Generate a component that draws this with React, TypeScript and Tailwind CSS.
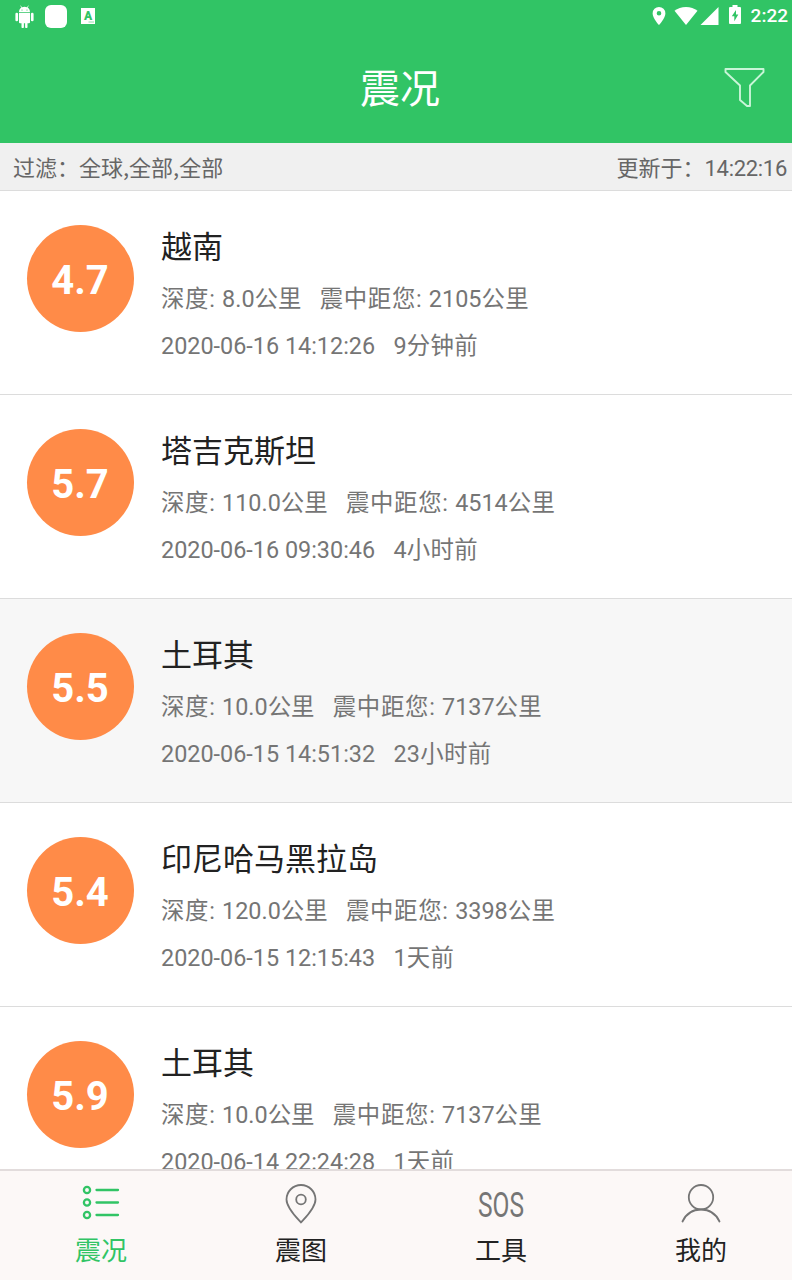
import type { ReactNode } from "react";

// ─── Data ────────────────────────────────────────────────────────────────────

interface Quake {
  magnitude: string;
  place: string;
  depth: string;
  distance: string;
  time: string;
  ago: string;
  active?: boolean;
}

const quakes: Quake[] = [
  { magnitude: "4.7", place: "越南", depth: "8.0", distance: "2105", time: "2020-06-16 14:12:26", ago: "9分钟前" },
  { magnitude: "5.7", place: "塔吉克斯坦", depth: "110.0", distance: "4514", time: "2020-06-16 09:30:46", ago: "4小时前" },
  { magnitude: "5.5", place: "土耳其", depth: "10.0", distance: "7137", time: "2020-06-15 14:51:32", ago: "23小时前", active: true },
  { magnitude: "5.4", place: "印尼哈马黑拉岛", depth: "120.0", distance: "3398", time: "2020-06-15 12:15:43", ago: "1天前" },
  { magnitude: "5.9", place: "土耳其", depth: "10.0", distance: "7137", time: "2020-06-14 22:24:28", ago: "1天前" },
];

// ─── Status Bar ──────────────────────────────────────────────────────────────

function StatusBar() {
  return (
    <div className="flex h-8 shrink-0 items-center justify-between pl-[15px] pr-1 text-white">
      <div className="flex items-center">
        {/* Android robot */}
        <svg width="19" height="24" viewBox="0 0 19 24" fill="currentColor">
          <path d="M4 8.2C4 5.8 5.1 4.4 6.4 3.6L5.2 1.8l.5-.3L7 3.2a6.5 6.5 0 0 1 5 0l1.3-1.7.5.3-1.2 1.8C13.9 4.4 15 5.8 15 8.2z" />
          <path d="M4 9h11v9.2a1 1 0 0 1-1 1h-1.500V23a1.200 1.200 0 0 1-2.400 0v-3.800H8.900V23a1.200 1.200 0 0 1-2.400 0v-3.800H5a1 1 0 0 1-1-1z" />
          <rect x="0.4" y="8.8" width="2.7" height="8.5" rx="1.3" />
          <rect x="15.9" y="8.8" width="2.7" height="8.5" rx="1.3" />
          <circle cx="7" cy="6" r="0.6" fill="#31c465" />
          <circle cx="12" cy="6" r="0.6" fill="#31c465" />
        </svg>
        <span className="ml-[11px] h-[23px] w-[22px] rounded-[6px] bg-white" />
        {/* Keyboard */}
        <svg className="ml-[14px] bg-white" width="14" height="16" viewBox="0 0 14 16">
          <text x="7" y="12" textAnchor="middle" fontSize="12" fontWeight="900" fill="#31c465">
            A
          </text>
          <path d="M7.5 14h5.5" stroke="#8edfaa" />
        </svg>
      </div>
      <div className="flex items-center">
        <svg width="14" height="20" viewBox="0 0 14 20" fill="currentColor">
          <path fillRule="evenodd" d="M7 1a6.4 6.4 0 0 0-6.4 6.4C.6 12 7 19 7 19s6.4-7 6.4-11.6A6.4 6.4 0 0 0 7 1zm0 4a2.3 2.3 0 1 1 0 4.6A2.3 2.3 0 0 1 7 5z" />
        </svg>
        <svg className="ml-2" width="24" height="20" viewBox="0 0 24 20" fill="currentColor">
          <path d="M.5 4.8C3.6 2.4 7.5 1 12 1s8.4 1.4 11.5 3.8L12 19z" />
        </svg>
        <svg className="ml-0.5" width="19" height="20" viewBox="0 0 19 20" fill="currentColor">
          <path d="M18.5 1v18H.5z" />
        </svg>
        <svg className="mb-0.5 ml-[10px]" width="12" height="20" viewBox="0 0 12 20" fill="currentColor">
          <path fillRule="evenodd" d="M3.5 0h5v2H11a1 1 0 0 1 1 1v15a1 1 0 0 1-1 1H1a1 1 0 0 1-1-1V3a1 1 0 0 1 1-1h2.5zM7 5 2.8 11.2h2.5v5l4-6.6H7z" />
        </svg>
        <span className="ml-[10px] text-[19px] font-medium leading-8">2:22</span>
      </div>
    </div>
  );
}

// ─── Header ──────────────────────────────────────────────────────────────────

function Header() {
  return (
    <header className="h-[143px] shrink-0 bg-[#31c465]">
      <StatusBar />
      <div className="grid h-[111px] grid-cols-[68px_1fr_60px] items-center text-white">
        <span />
        <h1 className="pt-[5px] text-center text-[40px] leading-[48px]">震况</h1>
        <svg className="-ml-[9px]" width="43" height="42" viewBox="0 0 43 42" fill="none" stroke="#c9f5d8" strokeWidth="1.9" strokeLinejoin="round">
          <path d="M2.500 2h38v3L27 18.500V39h-3l-7-6V18.500L2.500 5z" />
        </svg>
      </div>
    </header>
  );
}

// ─── List ────────────────────────────────────────────────────────────────────

function QuakeRow({ quake }: { quake: Quake }) {
  return (
    <li
      className={`flex h-[204px] shrink-0 border-b border-[#dcdcdc] pl-[27px] ${
        quake.active ? "bg-[#f7f7f7]" : "bg-white"
      }`}
    >
      <div className="mt-[34px] flex size-[107px] shrink-0 items-center justify-center rounded-full bg-[#ff8b48] pr-px pt-[5px] text-[40px] font-bold text-white">
        {quake.magnitude}
      </div>
      <div className="ml-[27px] mt-8 whitespace-pre text-[23.4px] text-[#757575]">
        <h2 className="text-[31px] leading-[50px] text-[#222]">{quake.place}</h2>
        <p className="leading-[52px]">
          <span className="tracking-[0.7px]">深度: </span>
          {quake.depth}公里
          <span className="tracking-[0.3px]">{"   "}</span>
          <span className="tracking-[0.7px]">震中距您: </span>
          {quake.distance}
          <span className="tracking-[0.3px]">公里</span>
        </p>
        <p className="leading-[42px]">
          {quake.time}
          <span className="tracking-[0.3px]">{"   "}{quake.ago}</span>
        </p>
      </div>
    </li>
  );
}

// ─── Tab Bar ─────────────────────────────────────────────────────────────────

function Tab({ label, active, children }: { label: string; active?: boolean; children: ReactNode }) {
  return (
    <button className={`flex w-[200px] shrink-0 flex-col items-center ${active ? "text-[#31c465]" : "text-[#222]"}`}>
      <svg
        className={`mt-3 ${active ? "" : "text-[#757575]"}`}
        width="48"
        height="42"
        viewBox="0 0 48 42"
        fill="none"
        stroke="currentColor"
        strokeWidth="1.8"
        strokeLinecap="round"
        strokeLinejoin="round"
      >
        {children}
      </svg>
      <span className="mt-[7px] text-[26px] leading-[38px]">{label}</span>
    </button>
  );
}

function TabBar() {
  return (
    <nav className="flex h-[111px] shrink-0 border-t-2 border-[#e2dcdc] bg-[#fcf8f7] pl-px">
      <Tab label="震况" active>
        <g strokeWidth="2.3">
          <circle cx="10" cy="7" r="3.1" />
          <circle cx="10" cy="19.5" r="3.1" />
          <circle cx="10" cy="32" r="3.1" />
          <path d="M19.5 7H41M19.5 19.5H41M19.5 32H41" />
        </g>
      </Tab>
      <Tab label="震图">
        <path d="M24 39.5C20 35 9.5 25 9.5 16.5a14.5 14.5 0 0 1 29 0C38.5 25 28 35 24 39.5z" />
        <circle cx="24" cy="16.5" r="4.8" />
      </Tab>
      <Tab label="工具">
        <text x="1" y="33.5" fontSize="35" textLength="46" lengthAdjust="spacingAndGlyphs" fill="currentColor" stroke="none">
          SOS
        </text>
      </Tab>
      <Tab label="我的">
        <circle cx="24" cy="14.2" r="12.2" />
        <path d="M5.500 38.500C9 31 16 26.500 24 26.500S39 31 42.500 38.500" />
      </Tab>
    </nav>
  );
}

export default function App() {
  return (
    <div className="flex h-[1280px] w-[792px] flex-col overflow-hidden bg-white font-[Roboto,'Noto_Sans_CJK_SC',sans-serif]">
      <Header />
      <div className="flex h-12 shrink-0 items-center justify-between border-b border-[#dcdcdc] bg-[#f0f0f0] pl-[13px] pr-[5px] text-[22px] text-[#666]">
        <span className="font-['Noto_Sans_CJK_SC',sans-serif] leading-[33px]">过滤：全球,全部,全部</span>
        <span className="pt-1">
          更新于：<span className="tracking-[-0.3px]">14:22:16</span>
        </span>
      </div>
      <ul className="flex min-h-0 flex-1 flex-col overflow-hidden">
        {quakes.map((quake) => (
          <QuakeRow key={quake.time} quake={quake} />
        ))}
      </ul>
      <TabBar />
    </div>
  );
}
